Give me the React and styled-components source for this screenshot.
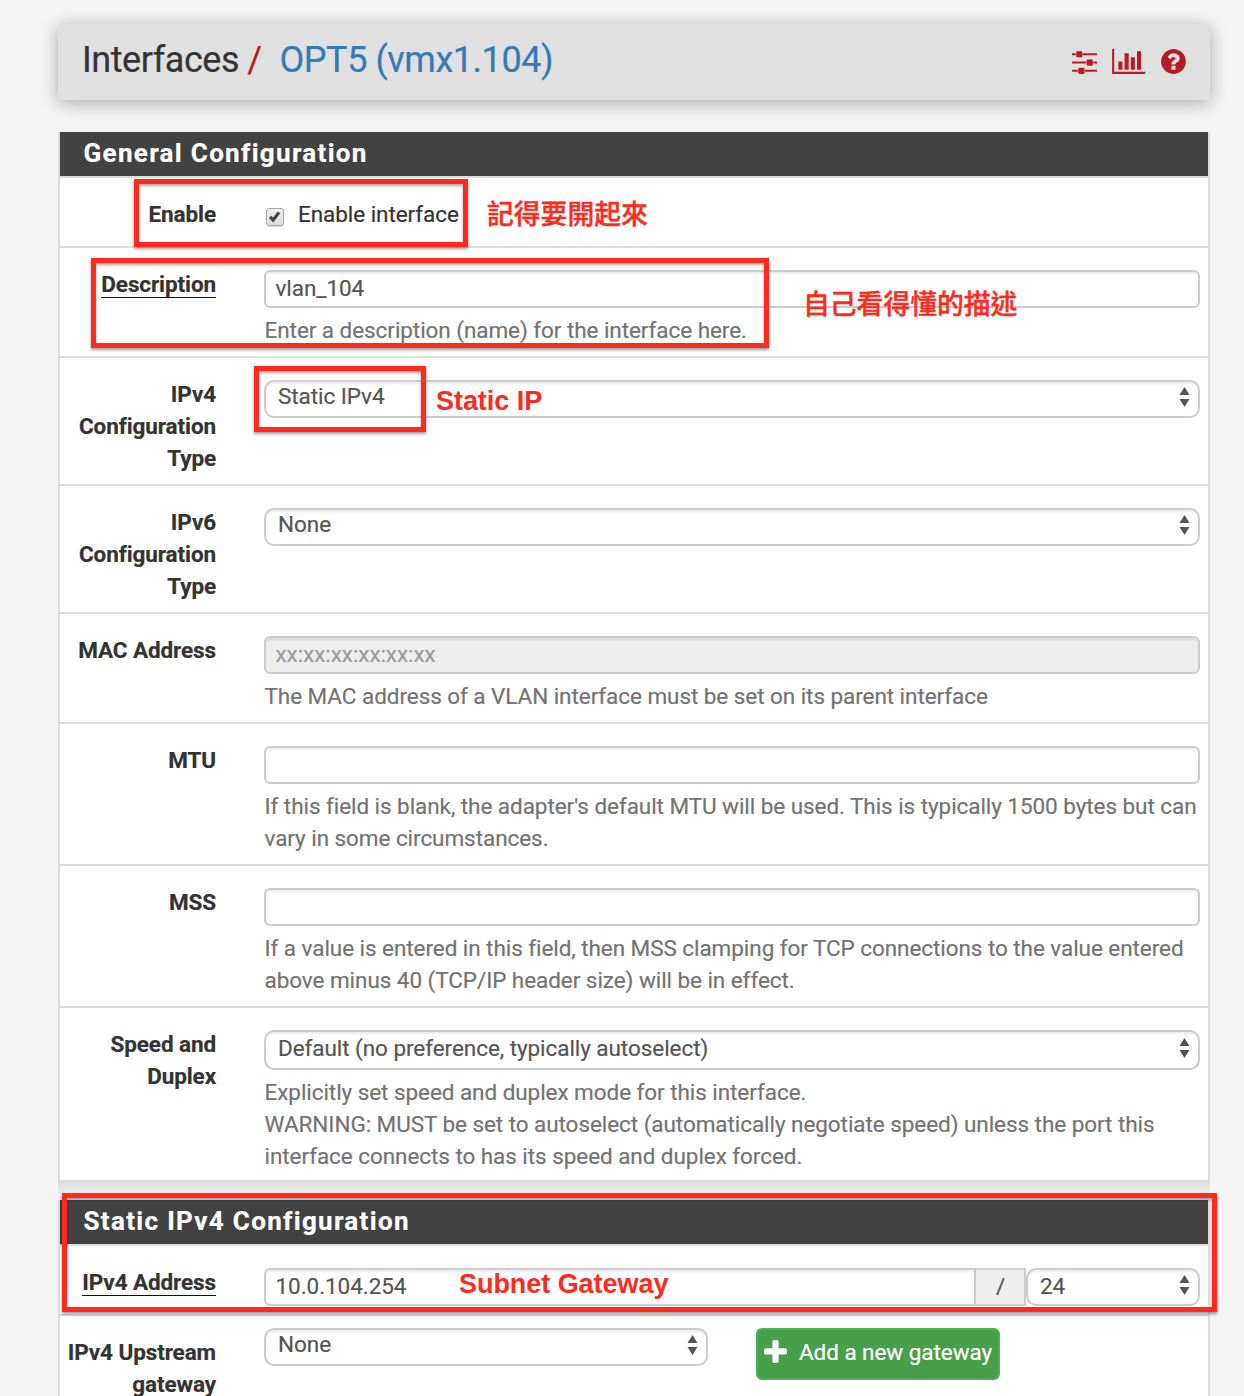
import React from "react";
import styled, { createGlobalStyle, css } from "styled-components";

const GlobalStyle = createGlobalStyle`
  *, *::before, *::after { box-sizing: border-box; }
  body {
    margin: 0;
    background: #f4f4f4;
    color: #333;
    font-family: Roboto, "Liberation Sans", sans-serif;
    font-size: 22.5px;
    letter-spacing: -0.06px;
    line-height: 32px;
    -webkit-text-stroke: 0.2px currentColor;
  }
`;

const Page = styled.main`
  position: relative;
  height: 1396px;
  overflow: hidden;
  padding: 24px 34px 0 58px;
`;

const PageHeader = styled.header`
  display: flex;
  justify-content: space-between;
  height: 76px;
  padding: 0 24px;
  background: #e0e0e0;
  border-radius: 4px;
  box-shadow: 0 3px 18px rgba(0, 0, 0, 0.3);
`;

const Breadcrumb = styled.h1`
  display: flex;
  margin: 0;
  font-size: 36px;
  font-weight: 400;
  letter-spacing: -0.45px;
  line-height: 73px;
  white-space: pre;
`;

const Slash = styled.span`
  margin: 0 18px 0 8px;
  color: #b71c1c;
`;

const Crumb = styled.a`
  color: #337ab7;
`;

const HeaderIcons = styled.nav`
  display: flex;
  gap: 15.5px;
  padding-top: 23px;
  color: #b71c23;
`;

const Glyph = styled.svg`
  display: block;
  flex: none;
  fill: currentColor;
`;

const Panel = styled.section`
  margin-top: ${(p) => p.$top || 0}px;
  background: #fff;
  border: solid #ddd;
  border-width: 0 2px 2px;
`;

const PanelShade = styled.div`
  height: 18px;
  background: linear-gradient(#dfdfdf, #ebebeb 50%, #f0f0f0);
`;

const PanelTitle = styled.h2`
  height: 46px;
  margin: 0;
  padding-left: 23.5px;
  background: #424242;
  border-bottom: 2px solid #ddd;
  color: #fff;
  font-size: 26px;
  font-weight: 700;
  letter-spacing: 1.32px;
  line-height: 42px;
`;

const Row = styled.div`
  display: flex;
  height: ${(p) => p.$height}px;
  border-bottom: ${(p) => (p.$last ? 0 : 2)}px solid #ddd;
`;

const Label = styled.div`
  flex: none;
  width: 156px;
  margin-right: 48px;
  padding-top: 20px;
  font-weight: 700;
  letter-spacing: -0.1px;
  text-align: right;
`;

const Required = styled.span`
  border-bottom: 1.5px solid #111;
`;

const Field = styled.div`
  width: 936px;
  padding-top: ${(p) => p.$top ?? 22}px;
`;

const FieldLine = styled.div`
  display: flex;
  align-items: flex-start;
`;

const box = css`
  display: flex;
  align-items: center;
  height: ${(p) => p.$height || 38}px;
  border: 2px solid #ccc;
  color: #555;
  box-shadow: inset 0 2px 2px rgba(0, 0, 0, 0.075);
`;

const Input = styled.div`
  ${box}
  flex: 1;
  padding: 0 9.5px 2px;
  border-radius: ${(p) => (p.$joined ? "6px 0 0 6px" : "6px")};
  background: ${(p) => (p.$disabled ? "#eee" : "#fff")};
  color: ${(p) => (p.$disabled ? "#999" : "#555")};
`;

const Addon = styled.div`
  width: 52px;
  height: 38px;
  margin-left: -2px;
  padding-left: 1px;
  border: 2px solid #ccc;
  background: #eee;
  color: #555;
  line-height: 33px;
  text-align: center;
`;

const SelectBox = styled.div`
  ${box}
  align-items: flex-start;
  justify-content: space-between;
  width: ${(p) => p.$width || 936}px;
  padding: 0 8px 0 12px;
  border-radius: 10px;
  background: #fff;
`;

const SelectValue = styled.span`
  margin-top: ${(p) => p.$shift ?? -2}px;
`;

const Arrows = styled.svg`
  flex: none;
  margin-top: ${(p) => (p.$tall ? 6 : 5)}px;
  fill: #555;
`;

const Help = styled.p`
  margin: 6px 0 0;
  padding-left: 0.5px;
  color: #737373;
  white-space: nowrap;
`;

const CheckLabel = styled.label`
  display: flex;
  align-items: center;
  gap: 14px;
  padding-left: 2px;
`;

const Checkbox = styled.span`
  display: flex;
  width: 18px;
  height: 18px;
  margin-top: 5px;
  border: 1.5px solid #a8a8a8;
  border-radius: 3px;
  background: linear-gradient(#eee, #dcdcdc);
  box-shadow: 0 1px 1px rgba(0, 0, 0, 0.15);
`;

const AddButton = styled.button`
  display: flex;
  align-items: center;
  gap: 9px;
  width: 244px;
  height: 52px;
  margin-left: 48px;
  padding: 0 0 4px 3px;
  border: 2px solid #4caf50;
  border-radius: 6px;
  background: #479f4a;
  color: #fff;
  font: inherit;
  letter-spacing: inherit;
  white-space: nowrap;
`;

const Marker = styled.div`
  position: absolute;
  left: ${(p) => p.$x}px;
  top: ${(p) => p.$y}px;
  width: ${(p) => p.$w}px;
  height: ${(p) => p.$h}px;
  border: 5px solid #ff2a1c;
  box-shadow: 0 2px 3px rgba(0, 0, 0, 0.4), inset 0 2px 3px rgba(0, 0, 0, 0.35);
`;

const Note = styled.div`
  position: absolute;
  left: ${(p) => p.$x}px;
  top: ${(p) => p.$y}px;
  color: #ff2a1c;
  font-family: "Liberation Sans", "Noto Sans CJK TC", sans-serif;
  font-size: ${(p) => (p.$weight ? 26.8 : 27)}px;
  font-weight: ${(p) => p.$weight || 700};
  letter-spacing: ${(p) => (p.$weight ? 0 : -0.05)}px;
  line-height: 36px;
  white-space: nowrap;
  -webkit-text-stroke: ${(p) => (p.$weight ? 0.4 : 0)}px currentColor;
`;

const SlidersIcon = () => (
  <Glyph width="25" height="29" viewBox="0 0 1536 1792">
    <path d="M352 1408v128h-352v-128h352zM704 1280q26 0 45 19t19 45v256q0 26-19 45t-45 19h-256q-26 0-45-19t-19-45v-256q0-26 19-45t45-19h256zM864 896v128h-864v-128h864zM224 384v128h-224v-128h224zM1536 1408v128h-736v-128h736zM576 256q26 0 45 19t19 45v256q0 26-19 45t-45 19h-256q-26 0-45-19t-19-45v-256q0-26 19-45t45-19h256zM1216 768q26 0 45 19t19 45v256q0 26-19 45t-45 19h-256q-26 0-45-19t-19-45v-256q0-26 19-45t45-19h256zM1536 896v128h-224v-128h224zM1536 384v128h-864v-128h864z" />
  </Glyph>
);

const ChartIcon = () => (
  <Glyph width="33.4" height="29" viewBox="0 0 2048 1792">
    <path d="M640 896v512h-256v-512h256zM1024 384v1024h-256v-1024h256zM2048 1536v128h-2048v-1536h128v1408h1920zM1408 640v768h-256v-768h256zM1792 256v1152h-256v-1152h256z" />
  </Glyph>
);

const HelpIcon = () => (
  <Glyph width="25" height="29" viewBox="0 0 1536 1792">
    <path d="M896 1376v-192q0-14-9-23t-23-9h-192q-14 0-23 9t-9 23v192q0 14 9 23t23 9h192q14 0 23-9t9-23zM1152 704q0-88-55.5-163t-138.5-116-170-41q-243 0-371 213-15 24 8 42l132 100q7 6 19 6 16 0 25-12 53-68 86-92 34-24 86-24 48 0 85.5 26t37.5 59q0 38-20 61t-68 45q-63 28-115.5 86.5t-52.5 125.5v36q0 14 9 23t23 9h192q14 0 23-9t9-23q0-19 21.5-49.5t54.5-49.5q32-18 49-28.5t46-35 44.5-48 28-60.5 12.5-81zM1536 896q0 209-103 385.5t-279.5 279.5-385.5 103-385.5-103-279.5-279.5-103-385.5 103-385.5 279.5-279.5 385.5-103 385.5 103 279.5 279.5 103 385.5z" />
  </Glyph>
);

const PlusIcon = () => (
  <Glyph width="29" height="29" viewBox="0 0 1792 1792">
    <path d="M1600 736v192q0 40-28 68t-68 28h-416v416q0 40-28 68t-68 28h-192q-40 0-68-28t-28-68v-416h-416q-40 0-68-28t-28-68v-192q0-40 28-68t68-28h416v-416q0-40 28-68t68-28h192q40 0 68 28t28 68v416h416q40 0 68 28t28 68z" />
  </Glyph>
);

const Select = ({ children, width, height, shift }) => (
  <SelectBox $width={width} $height={height}>
    <SelectValue $shift={shift}>{children}</SelectValue>
    <Arrows $tall={height > 38} width="11" height="20" viewBox="0 0 11 20">
      <path d="M5.5 0L10.5 8H0.5zM0.5 12H10.5L5.5 20z" />
    </Arrows>
  </SelectBox>
);

export default function App() {
  return (
    <Page>
      <GlobalStyle />
      <PageHeader>
        <Breadcrumb>
          <span>Interfaces</span>
          <Slash>/</Slash>
          <Crumb>OPT5 (vmx1.104)</Crumb>
        </Breadcrumb>
        <HeaderIcons>
          <SlidersIcon />
          <ChartIcon />
          <HelpIcon />
        </HeaderIcons>
      </PageHeader>

      <Panel $top={32}>
        <PanelTitle>General Configuration</PanelTitle>
        <Row $height={70}>
          <Label>Enable</Label>
          <Field $top={20}>
            <CheckLabel>
              <Checkbox>
                <svg width="15" height="15" viewBox="0 0 15 15">
                  <path d="M3 7.8L6.2 11L12 3.4" fill="none" stroke="#444" strokeWidth="3.2" />
                </svg>
              </Checkbox>
              Enable interface
            </CheckLabel>
          </Field>
        </Row>
        <Row $height={110}>
          <Label><Required>Description</Required></Label>
          <Field>
            <FieldLine><Input>vlan_104</Input></FieldLine>
            <Help>Enter a description (name) for the interface here.</Help>
          </Field>
        </Row>
        <Row $height={128}>
          <Label>IPv4 Configuration Type</Label>
          <Field><Select>Static IPv4</Select></Field>
        </Row>
        <Row $height={128}>
          <Label>IPv6 Configuration Type</Label>
          <Field><Select>None</Select></Field>
        </Row>
        <Row $height={110}>
          <Label>MAC Address</Label>
          <Field>
            <FieldLine><Input $disabled>xx:xx:xx:xx:xx:xx</Input></FieldLine>
            <Help>The MAC address of a VLAN interface must be set on its parent interface</Help>
          </Field>
        </Row>
        <Row $height={142}>
          <Label>MTU</Label>
          <Field>
            <FieldLine><Input /></FieldLine>
            <Help>
              If this field is blank, the adapter's default MTU will be used. This is typically 1500 bytes but can
              <br />
              vary in some circumstances.
            </Help>
          </Field>
        </Row>
        <Row $height={142}>
          <Label>MSS</Label>
          <Field>
            <FieldLine><Input /></FieldLine>
            <Help>
              If a value is entered in this field, then MSS clamping for TCP connections to the value entered
              <br />
              above minus 40 (TCP/IP header size) will be in effect.
            </Help>
          </Field>
        </Row>
        <Row $height={172} $last>
          <Label>Speed and Duplex</Label>
          <Field>
            <Select height={40} shift={0}>Default (no preference, typically autoselect)</Select>
            <Help>
              Explicitly set speed and duplex mode for this interface.
              <br />
              WARNING: MUST be set to autoselect (automatically negotiate speed) unless the port this
              <br />
              interface connects to has its speed and duplex forced.
            </Help>
          </Field>
        </Row>
      </Panel>

      <PanelShade />

      <Panel>
        <PanelTitle>Static IPv4 Configuration</PanelTitle>
        <Row $height={70}>
          <Label><Required>IPv4 Address</Required></Label>
          <Field>
            <FieldLine>
              <Input $joined>10.0.104.254</Input>
              <Addon>/</Addon>
              <Select width={174} shift={0}>24</Select>
            </FieldLine>
          </Field>
        </Row>
        <Row $height={120} $last>
          <Label>IPv4 Upstream gateway</Label>
          <Field $top={12}>
            <FieldLine>
              <Select width={444}>None</Select>
              <AddButton>
                <PlusIcon />
                Add a new gateway
              </AddButton>
            </FieldLine>
          </Field>
        </Row>
      </Panel>

      <Marker $x={134} $y={179} $w={334} $h={68} />
      <Marker $x={91} $y={258} $w={678} $h={90} />
      <Marker $x={254} $y={366} $w={172} $h={66} />
      <Marker $x={62} $y={1193} $w={1155} $h={119} />
      <Note $x={487} $y={197} $weight={500}>記得要開起來</Note>
      <Note $x={803} $y={287} $weight={500}>自己看得懂的描述</Note>
      <Note $x={436} $y={383}>Static IP</Note>
      <Note $x={459} $y={1266}>Subnet Gateway</Note>
    </Page>
  );
}
